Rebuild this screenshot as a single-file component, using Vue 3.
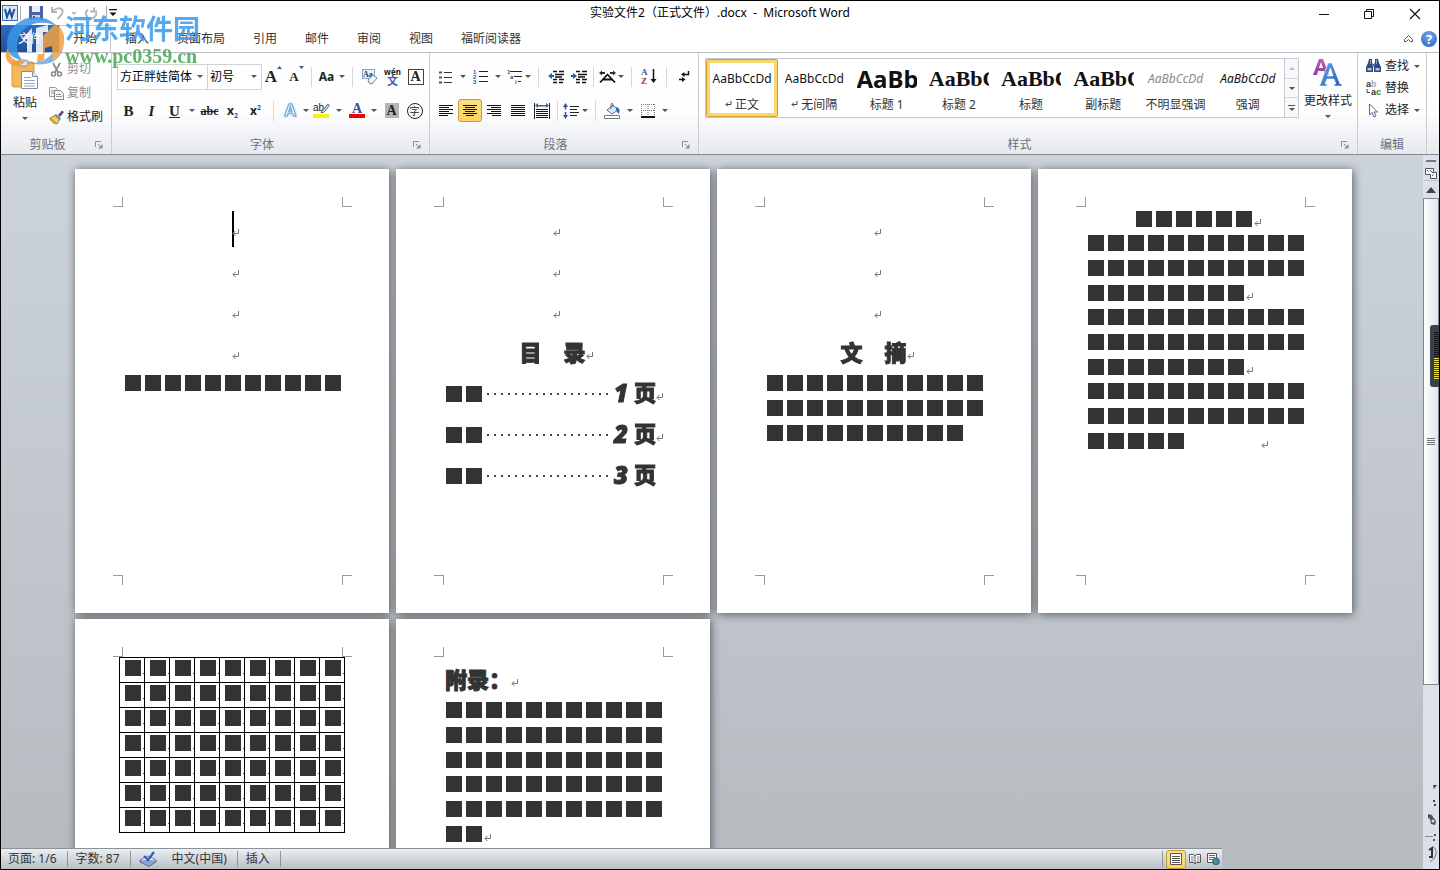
<script setup>
const tabs = ['开始', '插入', '页面布局', '引用', '邮件', '审阅', '视图', '福昕阅读器']

const styles = [
  { name: '正文', sample: 'AaBbCcDd', kind: 'norm', mark: true, active: true },
  { name: '无间隔', sample: 'AaBbCcDd', kind: 'norm', mark: true },
  { name: '标题 1', sample: 'AaBb', kind: 'h1' },
  { name: '标题 2', sample: 'AaBbC', kind: 'h2' },
  { name: '标题', sample: 'AaBbC', kind: 'h2' },
  { name: '副标题', sample: 'AaBbC', kind: 'h2' },
  { name: '不明显强调', sample: 'AaBbCcDd', kind: 'subtle' },
  { name: '强调', sample: 'AaBbCcDd', kind: 'em' }
]

const row = (n, mark = '', center = false) => ({ n, mark, center })

const pages = [
  { parts: [
    { type: 'empty', cursor: true }, { type: 'empty' }, { type: 'empty' }, { type: 'empty' },
    { type: 'rows', rows: [row(11)] }
  ] },
  { parts: [
    { type: 'empty' }, { type: 'empty' }, { type: 'empty' },
    { type: 'title', text: '目　录', center: true },
    { type: 'toc', page: 1, mark: true }, { type: 'toc', page: 2, mark: true }, { type: 'toc', page: 3 }
  ] },
  { parts: [
    { type: 'empty' }, { type: 'empty' }, { type: 'empty' },
    { type: 'title', text: '文　摘', center: true },
    { type: 'rows', after: true, rows: [row(11), row(11), row(10)] }
  ] },
  { parts: [
    { type: 'rows', rows: [row(6, 'near', true)] },
    { type: 'rows', rows: [row(11), row(11), row(8, 'near')] },
    { type: 'rows', rows: [row(11), row(11), row(8, 'near')] },
    { type: 'rows', rows: [row(11), row(11), row(5, 'far')] }
  ] },
  { table: true },
  { parts: [
    { type: 'title', text: '附录：', center: false },
    { type: 'rows', after: true, rows: [row(11), row(11), row(11)] },
    { type: 'rows', rows: [row(11), row(11), row(2, 'near')] }
  ] }
]
</script>

<template>
  <div class="window">
    <header class="titlebar">
      <div class="quick">
        <svg class="wicon" width="17" height="17" viewBox="0 0 17 17">
          <rect x="0.5" y="0.5" width="15" height="15" fill="#dce9f6" stroke="#3d6ea8" />
          <path d="M3 4l2 8 2.800-7 2 7L12.500 4" fill="none" stroke="#1f4f96" stroke-width="2" />
        </svg>
        <i class="vline"></i>
        <button aria-label="保存">
          <svg width="14" height="14" viewBox="0 0 14 14"><path d="M0 0h14v14H1.500L0 12.500z" fill="#4b61a8" /><rect x="3" y="0" width="8" height="6" fill="#e8eefa" /><rect x="3" y="9" width="8" height="5" fill="#cdd6ee" /><rect x="4" y="10" width="2" height="3" fill="#36457e" /></svg>
        </button>
        <button aria-label="撤消" class="undo">
          <svg width="14" height="14" viewBox="0 0 14 14"><path d="M1 1v5h5M1.500 5.500C4 2 10 1 11.500 4.500 12.500 8 9 10 6.500 13" fill="none" stroke="#b4b7bc" stroke-width="2" /></svg>
        </button>
        <i class="dd pale"></i>
        <button aria-label="重复" class="redo">
          <svg width="14" height="14" viewBox="0 0 14 14"><path d="M10 1.500v4h-4M4 3.500C0.500 6 1.500 12 6.500 12.500 11.500 12.500 13.500 8 11.500 4.500" fill="none" stroke="#b4b7bc" stroke-width="2" /></svg>
        </button>
        <i class="vline"></i>
        <button aria-label="自定义快速访问工具栏" class="custom">
          <svg width="8" height="8" viewBox="0 0 8 8"><path d="M0 0h8v1.200H0zM0.500 3.500h7L4 7z" fill="#111" /></svg>
        </button>
      </div>
      <h1>实验文件2（正式文件）.docx &nbsp;-&nbsp; Microsoft Word</h1>
      <div class="winbtns">
        <button aria-label="最小化"><svg width="12" height="12" viewBox="0 0 12 12"><path d="M1 6.500h10" stroke="#111" /></svg></button>
        <button aria-label="还原"><svg width="12" height="12" viewBox="0 0 12 12"><path d="M1.500 3.500h7v7h-7zM3.500 3.500v-2h7v7h-2" fill="none" stroke="#111" /></svg></button>
        <button aria-label="关闭"><svg width="12" height="12" viewBox="0 0 12 12"><path d="M1 1l10 10M11 1L1 11" stroke="#111" stroke-width="1.200" /></svg></button>
      </div>
    </header>

    <nav class="tabs">
      <button class="file">文件</button>
      <button v-for="(t, i) in tabs" :key="t" class="tab" :class="{ active: i === 0 }">{{ t }}</button>
      <span class="grow"></span>
      <button class="plain" aria-label="功能区最小化">
        <svg width="11" height="9" viewBox="0 0 11 9"><path d="M1.500 5.500L5.500 1.500l4 4v2H7.500L5.500 5.500l-2 2h-2z" fill="#fff" stroke="#555" /></svg>
      </button>
      <button class="help" aria-label="帮助">?</button>
    </nav>

    <section class="ribbon">
      <div class="group clip">
        <div class="body">
          <button class="big">
            <svg width="28" height="31" viewBox="0 0 28 31">
              <rect x="1" y="3" width="22" height="25" rx="2" fill="#efb95c" stroke="#d89a3c" />
              <rect x="7" y="1" width="10" height="6" rx="2" fill="#e4e6ea" stroke="#8b9099" />
              <path d="M10.500 12.500h11l5 5v12h-16z" fill="#fff" stroke="#7d8ca8" />
              <path d="M21.500 12.500v5h5" fill="#dfe7f3" stroke="#7d8ca8" />
              <path d="M13 18.500h7M13 21.500h11M13 24.500h11M13 27h11" stroke="#8fa5c9" />
            </svg>
            <span>粘贴</span><i class="dd"></i>
          </button>
          <div class="stack">
            <button class="line off">
              <svg width="15" height="15" viewBox="0 0 15 15"><path d="M4 1l5 9M11 1L6 10" stroke="#85888d" stroke-width="1.600" fill="none" /><circle cx="4.500" cy="12" r="2" fill="none" stroke="#85888d" stroke-width="1.500" /><circle cx="10.500" cy="12" r="2" fill="none" stroke="#85888d" stroke-width="1.500" /></svg>剪切
            </button>
            <button class="line off">
              <svg width="15" height="15" viewBox="0 0 15 15"><path d="M0.500 1.500h6l2 2v7h-8z" fill="#f2f2f2" stroke="#96999e" /><path d="M2 5h4M2 7h4" stroke="#96999e" /><path d="M5.500 4.500h6l3 3v6h-9z" fill="#f7f7f7" stroke="#85888d" /><path d="M7 8.500h5M7 10.500h6" stroke="#96999e" /></svg>复制
            </button>
            <button class="line">
              <svg width="15" height="15" viewBox="0 0 15 15"><path d="M9 5l4-4.500L15 2l-4 5z" fill="#5a4a78" /><path d="M1 8l6-3 4 4-3 5z" fill="#f0cf52" stroke="#a98518" /><path d="M7 4l5 4.500-1.500 1.500L5.500 5.500z" fill="#6c7fa8" /><path d="M0 9l5 5 3 .5L1 8z" fill="#c79e2b" /></svg>格式刷
            </button>
          </div>
        </div>
        <div class="caption"><span>剪贴板</span><button class="launch" aria-label="剪贴板选项"><svg width="8" height="8" viewBox="0 0 8 8"><path d="M.5 6V.5H6M3 3l3 3" fill="none" stroke="#8a9099" /><path d="M7.500 3v4.500H3z" fill="#8a9099" /></svg></button></div>
      </div>

      <div class="group font">
        <div class="body rows">
          <div class="tools">
            <label class="combo face"><select aria-label="字体"><option>方正胖娃简体</option></select><i class="dd"></i></label>
            <label class="combo size"><select aria-label="字号"><option>初号</option></select><i class="dd"></i></label>
            <button class="t serif" aria-label="增大字体"><b class="f16">A</b><svg class="tip" width="5" height="12" viewBox="0 0 5 12"><path d="M0 4h5L2.500 1z" fill="#3b5c9a" /></svg></button>
            <button class="t serif" aria-label="缩小字体"><b class="f13">A</b><svg class="tip" width="5" height="12" viewBox="0 0 5 12"><path d="M0 1h5L2.500 4z" fill="#3b5c9a" /></svg></button>
            <i class="sep7"></i>
            <button class="t" aria-label="更改大小写"><b class="f12">Aa</b></button><i class="a8"><i class="dd"></i></i>
            <i class="sep12"></i>
            <button class="t" aria-label="清除格式">
              <svg width="16" height="16" viewBox="0 0 16 16"><rect x="0.500" y="0.500" width="12" height="9" fill="#eaf1fb" stroke="#8aa0c6" /><text x="1" y="8" font-size="8" font-weight="700" font-family="Liberation Serif, serif" fill="#223a70">Aa</text><path d="M6 11l5-5 4 3-5 6-3-1z" fill="#f3f6fb" stroke="#7080a8" /></svg>
            </button>
            <button class="t pinyin" aria-label="拼音指南"><small>wén</small><span>文</span></button>
            <button class="t" aria-label="字符边框"><b class="boxed">A</b></button>
          </div>
          <div class="tools">
            <button class="t serif" aria-label="加粗"><b class="f14">B</b></button>
            <button class="t serif" aria-label="倾斜"><b class="f14 it">I</b></button>
            <button class="t serif" aria-label="下划线"><b class="f14 un">U</b></button><i class="a12"><i class="dd"></i></i>
            <button class="t serif" aria-label="删除线"><b class="f12 st">abc</b></button>
            <button class="t" aria-label="下标"><b class="f12">x<sub>2</sub></b></button>
            <button class="t" aria-label="上标"><b class="f12">x<sup>2</sup></b></button>
            <i class="sep12"></i>
            <button class="t" aria-label="文本效果"><b class="glow">A</b></button><i class="a8"><i class="dd"></i></i>
            <button class="t" aria-label="突出显示">
              <svg width="17" height="17" viewBox="0 0 17 17"><text x="0" y="9" font-size="10" font-family="Liberation Sans, sans-serif" fill="#222">ab</text><path d="M9 9l6-7 1.500 1.500-6 7H8z" fill="#c9d5ea" stroke="#5b6b92" /><rect x="0" y="12" width="16" height="4" fill="#f8f112" /></svg>
            </button><i class="a12"><i class="dd"></i></i>
            <button class="t" aria-label="字体颜色">
              <svg width="16" height="17" viewBox="0 0 16 17"><text x="3" y="11" font-size="14" font-weight="700" font-family="Liberation Serif, serif" fill="#2f4f8f">A</text><rect x="0" y="12" width="16" height="4" fill="#f00000" /></svg>
            </button><i class="a12"><i class="dd"></i></i>
            <button class="t" aria-label="字符底纹"><b class="shaded">A</b></button>
            <button class="t" aria-label="带圈字符"><span class="ring">字</span></button>
          </div>
        </div>
        <div class="caption"><span>字体</span><button class="launch" aria-label="字体选项"><svg width="8" height="8" viewBox="0 0 8 8"><path d="M.5 6V.5H6M3 3l3 3" fill="none" stroke="#8a9099" /><path d="M7.500 3v4.500H3z" fill="#8a9099" /></svg></button></div>
      </div>

      <div class="group para">
        <div class="body rows">
          <div class="tools">
            <button class="t" aria-label="项目符号"><svg width="14" height="14" viewBox="0 0 14 14"><path d="M5 2.500h8M5 7.500h8M5 12.500h8" stroke="#333" /><path d="M0 1.500h3v2H0zM0 6.500h3v2H0zM0 11.500h3v2H0z" fill="#3b5c78" /></svg></button><i class="a12"><i class="dd"></i></i>
            <button class="t" aria-label="编号"><svg width="15" height="15" viewBox="0 0 15 15"><path d="M6 2.500h9M6 7.500h9M6 12.500h9" stroke="#222" /><g font-size="6" font-weight="700" font-family="Liberation Sans, sans-serif" fill="#2d5a9c"><text x="0" y="5">1</text><text x="0" y="10">2</text><text x="0" y="15">3</text></g></svg></button><i class="a12"><i class="dd"></i></i>
            <button class="t w20" aria-label="多级列表"><svg width="17" height="15" viewBox="0 0 17 15"><path d="M4 2.500h12M8 7.500h8M12 12.500h3" stroke="#222" /><g font-size="6" font-weight="700" font-family="Liberation Sans, sans-serif" fill="#2d4a7c"><text x="1" y="5">1</text><text x="4" y="10">a</text><text x="9" y="15">i</text></g></svg></button><i class="a8"><i class="dd"></i></i>
            <i class="sep12"></i>
            <button class="t" aria-label="减少缩进量"><svg width="16" height="14" viewBox="0 0 16 14"><path d="M5 1.500h4M11 1.500h5M7 4.500h9M7 7h7M5 9.500h4M11 9.500h5M5 12.500h4M11 12.500h4" stroke="#111" stroke-width="1.500" /><path d="M0 6l4-3v2h2v2H4v2z" fill="#2d58b0" /></svg></button>
            <button class="t" aria-label="增加缩进量"><svg width="16" height="14" viewBox="0 0 16 14"><path d="M5 1.500h4M11 1.500h5M7 4.500h9M7 7h7M5 9.500h4M11 9.500h5M5 12.500h4M11 12.500h4" stroke="#111" stroke-width="1.500" /><path d="M6 6L2 3v2H0v2h2v2z" fill="#2d58b0" /></svg></button>
            <i class="sep7"></i>
            <button class="t w20" aria-label="中文版式"><svg width="17" height="14" viewBox="0 0 17 14"><path d="M1 12.500L8.500 4.500 16 12.500M4 9.500h9" stroke="#111" stroke-width="1.800" fill="none" /><path d="M0 3l3-2.500V2h3v2H3v1.500zM17 3l-3-2.500V2h-3v2h3v1.500z" fill="#1f2d50" /></svg></button><i class="a8"><i class="dd"></i></i>
            <i class="sep12"></i>
            <button class="t" aria-label="排序"><svg width="16" height="17" viewBox="0 0 16 17"><g font-size="9" font-weight="700" font-family="Liberation Serif, serif"><text x="0" y="7" fill="#2d58a0">A</text><text x="0" y="16" fill="#a03030">Z</text></g><path d="M12.500 1v12" stroke="#111" stroke-width="1.500" /><path d="M9.500 11h6l-3 4z" fill="#111" /></svg></button>
            <i class="sep12"></i>
            <button class="t" aria-label="显示编辑标记"><svg width="12" height="13" viewBox="0 0 12 13"><path d="M10.500 1v3.500H6M1 9.500h4" stroke="#111" stroke-width="1.500" fill="none" /><path d="M3 4.500l3.500-2.500v5zM7.500 9.500L4 7v5z" fill="#111" /></svg></button>
          </div>
          <div class="tools">
            <button class="t w24" aria-label="左对齐"><svg width="14" height="12" viewBox="0 0 14 12"><path d="M0 .5h14M0 2.500h10M0 4.500h14M0 6.500h10M0 8.500h14M0 10.500h9" stroke="#111" /></svg></button>
            <button class="t w24 on" aria-label="居中"><svg width="14" height="12" viewBox="0 0 14 12"><path d="M0 .5h14M2 2.500h10M0 4.500h14M2 6.500h10M0 8.500h14M3 10.500h8" stroke="#111" /></svg></button>
            <button class="t w24" aria-label="右对齐"><svg width="14" height="12" viewBox="0 0 14 12"><path d="M0 .5h14M4 2.500h10M0 4.500h14M4 6.500h10M0 8.500h14M5 10.500h9" stroke="#111" /></svg></button>
            <button class="t w24" aria-label="两端对齐"><svg width="14" height="12" viewBox="0 0 14 12"><path d="M0 .5h14M0 2.500h14M0 4.500h14M0 6.500h14M0 8.500h14M0 10.500h14" stroke="#111" /></svg></button>
            <button class="t w24" aria-label="分散对齐"><svg width="16" height="16" viewBox="0 0 16 16"><path d="M.5 0v16M15.500 0v16" stroke="#222" /><path d="M2 6.500h12M2 8.500h12M2 10.500h12M2 12.500h12M2 14.500h12" stroke="#111" /><path d="M1 2.500L4 0v2h8V0l3 2.500L12 5V3.500H4V5z" fill="#3a69a8" /></svg></button>
            <i class="sep7"></i>
            <button class="t w20" aria-label="行距"><svg width="16" height="16" viewBox="0 0 16 16"><path d="M7 3.500h9M7 6.500h7M7 9.500h9M7 12.500h7" stroke="#222" /><path d="M2.500 3v3.500M2.500 9v4" stroke="#2d50b0" stroke-width="1.500" /><path d="M0 4l2.500-4L5 4zM0 12l2.500 4L5 12z" fill="#2d50b0" /></svg></button><i class="a8"><i class="dd"></i></i>
            <i class="sep12"></i>
            <button class="t" aria-label="底纹"><svg width="17" height="16" viewBox="0 0 17 16"><path d="M3 7l6-5 5 5-6 4z" fill="#dfe8f5" stroke="#50688f" /><path d="M7 6V1.500C7 0 9 0 9 1.500V4" fill="none" stroke="#50688f" /><path d="M12 4c4 1 4 3 3 7-2-1-2-3-3-4z" fill="#2f6ab0" /><path d="M.5 12.500h15v3h-15z" fill="#fff" stroke="#777" /></svg></button><i class="a12"><i class="dd"></i></i>
            <button class="t" aria-label="框线"><svg width="14" height="14" viewBox="0 0 14 14"><path d="M.5 0v13M13.500 0v13M7 0v13M0 .5h14M0 6.500h14" stroke="#777" stroke-dasharray="1 1" fill="none" /><path d="M0 13h14" stroke="#111" stroke-width="2" /></svg></button><i class="a12"><i class="dd"></i></i>
          </div>
        </div>
        <div class="caption"><span>段落</span><button class="launch" aria-label="段落选项"><svg width="8" height="8" viewBox="0 0 8 8"><path d="M.5 6V.5H6M3 3l3 3" fill="none" stroke="#8a9099" /><path d="M7.500 3v4.500H3z" fill="#8a9099" /></svg></button></div>
      </div>

      <div class="group style">
        <div class="body">
          <div class="gallery">
            <button v-for="s in styles" :key="s.name" class="sty" :class="{ sel: s.active }">
              <span class="sample" :class="s.kind">{{ s.sample }}</span>
              <span class="sname"><svg v-if="s.mark" width="7" height="7" viewBox="0 0 7 7"><path d="M6 0v3.500H1M3 1.500l-2 2 2 2" fill="none" stroke="#444" /></svg>{{ s.name }}</span>
            </button>
            <div class="gscroll">
              <button aria-label="上一行"><i class="up"></i></button>
              <button aria-label="下一行"><i class="dd"></i></button>
              <button aria-label="其他"><i class="bar"></i><i class="dd"></i></button>
            </div>
          </div>
          <button class="big change">
            <svg width="30" height="30" viewBox="0 0 30 30">
              <defs>
                <linearGradient id="pa" x2="0" y2="1"><stop offset="0" stop-color="#c558b4" /><stop offset="1" stop-color="#8a3f9f" /></linearGradient>
                <linearGradient id="ba" x2="1" y2="1"><stop offset="0" stop-color="#6aa6e8" /><stop offset="1" stop-color="#1f5cb8" /></linearGradient>
              </defs>
              <path d="M0 17L6 1h4l6 16h-4l-1-4H5l-1 4zM6 10h4L8 4z" fill="url(#pa)" />
              <path d="M7 27L15 5h4l8 21h2v2h-8v-2h2l-2-5h-7l-2 5h2v2H6v-1zM14.500 18h5.500L17.500 10z" fill="url(#ba)" stroke="#fff" stroke-width=".6" />
            </svg>
            <span>更改样式</span><i class="dd"></i>
          </button>
        </div>
        <div class="caption"><span>样式</span><button class="launch" aria-label="样式选项"><svg width="8" height="8" viewBox="0 0 8 8"><path d="M.5 6V.5H6M3 3l3 3" fill="none" stroke="#8a9099" /><path d="M7.500 3v4.500H3z" fill="#8a9099" /></svg></button></div>
      </div>

      <div class="group edit">
        <div class="body stack">
          <button class="line">
            <svg width="15" height="14" viewBox="0 0 15 14"><path d="M3 0h3v4l1 1V13H0V8l2-4zM9 0h3l1 4 2 4v5H8V5l1-1z" fill="#2e4a7e" /><path d="M6 5h3v3H6z" fill="#5573a8" /><path d="M1.500 9h4v2.500h-4zM9.500 9h4v2.500h-4z" fill="#a9c2e6" /><path d="M4 1h1v4H4zM10 1h1v4h-1z" fill="#8aa5d0" /></svg>查找<i class="dd"></i>
          </button>
          <button class="line">
            <svg width="15" height="16" viewBox="0 0 15 16"><g font-size="9" font-weight="700" font-family="Liberation Sans, sans-serif"><text x="0" y="7" fill="#333">a</text><text x="5" y="7" fill="#aaa">b</text><text x="5" y="15" fill="#333">a</text><text x="10" y="15" fill="#2b8a3b">c</text></g><path d="M1 9v3.500h3" stroke="#345" fill="none" /></svg>替换
          </button>
          <button class="line">
            <svg width="15" height="15" viewBox="0 0 15 15"><path d="M3.500 1v11l2.500-2.500L8 14l2-1-2-4h3.500z" fill="#fff" stroke="#56698e" /></svg>选择<i class="dd"></i>
          </button>
        </div>
        <div class="caption"><span>编辑</span></div>
      </div>
    </section>

    <div class="work">
      <div class="left">
        <main class="canvas">
          <div class="pages">
            <article v-for="(p, i) in pages" :key="i" class="page">
              <i class="corner tl"></i><i class="corner tr"></i><i class="corner bl"></i><i class="corner br"></i>
              <table v-if="p.table">
                <tbody>
                  <tr v-for="r in 7" :key="r"><td v-for="c in 9" :key="c"><i class="sq"></i></td></tr>
                </tbody>
              </table>
              <div v-else class="flow">
                <template v-for="(part, k) in p.parts" :key="k">
                  <div v-if="part.type === 'empty'" class="empty">
                    <i v-if="part.cursor" class="cursor"></i>
                    <svg class="ret" width="8" height="8" viewBox="0 0 8 8"><path d="M6.500 0v4.500H1M3.500 2l-2.500 2.500 2.500 2.500" fill="none" stroke="#777" /></svg>
                  </div>
                  <h2 v-else-if="part.type === 'title'" class="heading" :class="{ center: part.center }">
                    <span>{{ part.text }}</span>
                    <svg class="ret" width="8" height="8" viewBox="0 0 8 8"><path d="M6.500 0v4.500H1M3.500 2l-2.500 2.500 2.500 2.500" fill="none" stroke="#777" /></svg>
                  </h2>
                  <div v-else-if="part.type === 'toc'" class="toc">
                    <i class="sq"></i><i class="sq"></i><i class="leader"></i>
                    <em>{{ part.page }}</em><b>页</b>
                    <svg v-if="part.mark" class="ret" width="8" height="8" viewBox="0 0 8 8"><path d="M6.500 0v4.500H1M3.500 2l-2.500 2.500 2.500 2.500" fill="none" stroke="#777" /></svg>
                  </div>
                  <div v-else class="para-rows" :class="{ after: part.after }">
                    <div v-for="(r, j) in part.rows" :key="j" class="brow" :class="{ center: r.center }">
                      <i v-for="n in r.n" :key="n" class="sq"></i>
                      <svg v-if="r.mark" class="ret" :class="r.mark" width="8" height="8" viewBox="0 0 8 8"><path d="M6.500 0v4.500H1M3.500 2l-2.500 2.500 2.500 2.500" fill="none" stroke="#777" /></svg>
                    </div>
                  </div>
                </template>
              </div>
            </article>
          </div>
        </main>
        <footer class="status">
          <div class="bar-l">
            <span>页面: 1/6</span><i></i><span>字数: 87</span><i></i>
            <svg width="18" height="16" viewBox="0 0 18 16"><path d="M1 9l8-4 8 4-7 5z" fill="#f4f7fc" stroke="#6a7ba5" /><path d="M1 9v2l9 4.500L17 11V9" fill="#8fa3cc" stroke="#5a6b95" /><path d="M5 5l4 4 6-8" fill="none" stroke="#2b5fc0" stroke-width="2.200" /></svg>
            <span>中文(中国)</span><i></i><span>插入</span><i></i>
            <span class="grow"></span><i></i>
            <button class="view on" aria-label="页面视图"><svg width="12" height="12" viewBox="0 0 12 12"><path d="M.5.5h11v11H.5z" fill="#fff" stroke="#555" /><path d="M2 3.500h8M2 5.500h8M2 7.500h8M2 9.500h8" stroke="#555" /></svg></button>
            <button class="view" aria-label="阅读版式"><svg width="12" height="12" viewBox="0 0 12 12"><path d="M.5 1.500h4L6 3l1.500-1.500h4v8h-4L6 11 4.500 9.500h-4zM6 3v8" fill="#fff" stroke="#555" /><path d="M2 4h2.500M2 6h2.500M2 8h2.500M8 4h2.500M8 6h2.500M8 8h2.500" stroke="#777" /></svg></button>
            <button class="view" aria-label="Web版式"><svg width="13" height="12" viewBox="0 0 13 12"><path d="M.5.5h9v9h-9z" fill="#fff" stroke="#555" /><path d="M2 2.500h6M2 4.500h6M2 6.500h4" stroke="#666" /><circle cx="9" cy="8.500" r="3.400" fill="#4b8a9c" stroke="#33617a" /></svg></button>
          </div>
          <div class="bar-r"></div>
        </footer>
      </div>

      <aside class="scroll">
        <i class="split"></i>
        <button aria-label="标尺"><svg width="12" height="12" viewBox="0 0 12 12"><path d="M.5 1.500h8v4h3v6h-6v-4h-5z" fill="#f5f5f8" stroke="#555" /><path d="M2 3l1.500 1.500M5 3l3 3M7 9l1.500-1.500" stroke="#555" /></svg></button>
        <button class="upbtn" aria-label="向上滚动"><svg width="10" height="6" viewBox="0 0 10 6"><path d="M0 6h10L5 0z" fill="#444" /></svg></button>
        <div class="thumb"><i></i></div>
        <div class="track"></div>
        <div class="nav">
          <svg width="12" height="80" viewBox="0 0 12 80"><path d="M8 2h4l-3 4z" fill="#444" /><path d="M8 17h2v2H8zM9 21h2v2H9z" fill="#444" /><path d="M3 31l4 1 1 2 3 4-1 4-4-1-1-5-2-1z" fill="#555" /><circle cx="8" cy="38" r="1.500" fill="#dbe0ea" /><path d="M0 53.500h8" stroke="#888" /><path d="M9 51h2v2H9zM8 56h2v2H8z" fill="#555" /><path d="M4 67l3-2v9M4 74h4" stroke="#333" stroke-width="2" fill="none" /><path d="M8 64c5 2 4 11-3 15" fill="none" stroke="#777" /></svg>
        </div>
        <div class="meter"><i></i></div>
      </aside>
    </div>

    <div class="brand">
      <svg width="60" height="56" viewBox="0 0 60 56">
        <path d="M2 32C1 14 16 2 33 3c9 1 15 5 20 10-7-4-13-5-20-4C19 11 12 20 12 33c0 5 2 9 5 13C8 45 3 40 2 32z" fill="#3b97e6" />
        <path d="M17 46c11 7 28 1 34-13 3-8 2-15-2-20 9 5 11 14 9 22C54 48 42 52 28 50c-5-1-9-2-11-4z" fill="#2f8fe0" opacity=".75" />
        <path d="M3 34c1 10 8 15 18 12-4 8-17 8-20-2-1-4 0-7 2-10z" fill="#f39a3b" />
        <path d="M34 26l16-16c7 3 10 10 9 18-1 9-5 15-11 20l-1-16-7 2-1 14h-7z" fill="#f5a13f" />
        <path d="M17 25l10-11v24h-5V25zM31 14l12-3v7h-5v22h-7z" fill="#fff" />
      </svg>
      <div><strong>河东软件园</strong><span>www.pc0359.cn</span></div>
    </div>
  </div>
</template>

<style>
html, body { margin: 0; background: #fff; }
</style>

<style scoped>
* { box-sizing: border-box; }
.window {
  position: relative; display: flex; flex-direction: column; height: 100vh;
  border: 1px solid #000; background: #fff; overflow: hidden;
  font: 12px/16px "Noto Sans", "Noto Sans CJK SC", sans-serif; color: #222;
}
button {
  display: flex; align-items: center; justify-content: center; margin: 0; padding: 0;
  border: 0; background: none; font: inherit; color: inherit; white-space: nowrap;
}
svg { display: block; flex: none; }
.grow { flex: 1; }
.dd { flex: none; width: 0; height: 0; border: 3px solid transparent; border-top-color: #555; border-bottom: 0; }
.pale { border-top-color: #bbb; }

.titlebar { display: grid; grid-template-columns: 1fr auto 1fr; align-items: center; height: 24px; }
.titlebar h1 { margin: 0; font-size: 12px; font-weight: 400; color: #000; }
.quick { display: flex; align-items: center; height: 20px; padding-left: 1px; }
.vline { width: 1px; height: 14px; margin-left: 1px; background: #aaa; }
.quick button { margin-left: 8px; }
.quick .undo { margin: 0 6px 0 8px; }
.quick .redo { margin: 0 7px; }
.quick .custom { margin-left: 2px; }
.winbtns { display: flex; justify-content: flex-end; }
.winbtns button { width: 45px; height: 24px; padding-top: 2px; }
.winbtns button:last-child { width: 48px; }

.tabs { display: flex; align-items: center; height: 27px; padding-right: 2px; }
.file { width: 58px; height: 27px; background: linear-gradient(#2f6cc4, #1f4f9e); color: #fff; }
.tab { height: 27px; padding: 0 14px; color: #333; }
.tab.active { border: 1px solid #c4c9d0; border-bottom: 0; padding: 0 13px; background: #fff; }
.plain { width: 24px; }
.help { width: 16px; height: 16px; margin-left: 1px; border-radius: 50%; background: radial-gradient(circle at 50% 30%, #76a7e8, #2b62bb); color: #fff; font-weight: 700; font-size: 13px; }

.ribbon { display: flex; height: 103px; border-top: 1px solid #b9bdc4; border-bottom: 1px solid #858a91; background: linear-gradient(#fff 0, #fdfdfe 60%, #e6e9ed 100%); }
.group { display: flex; flex: none; flex-direction: column; border-right: 1px solid #c9cdd3; }
.clip { width: 111px; }
.font { width: 318px; }
.para { width: 269px; }
.style { flex: 1 1 0; min-width: 0; }
.edit { width: 69px; margin-right: 12px; }
.body { display: flex; flex: 1; }
.caption { display: flex; align-items: center; height: 19px; color: #6a7280; }
.caption span { flex: 1; text-align: center; }
.launch { width: 8px; height: 8px; margin: 0 8px 0 1px; }

.big { flex-direction: column; justify-content: flex-start; width: 48px; padding-top: 6px; }
.big span { margin-top: 5px; }
.big .dd { margin-top: 6px; }
.stack { display: flex; flex-direction: column; }
.clip .stack { padding-top: 4px; }
.line { height: 24px; justify-content: flex-start; gap: 3px; }
.off { color: #8a8d92; }
.edit .stack { padding: 2px 0 0 8px; }
.edit .line { height: 22px; gap: 4px; }
.edit .line .dd { margin-left: 1px; }

.rows { flex-direction: column; padding: 10px 0 0 5px; gap: 7px; }
.para .rows { padding-left: 4px; }
.tools { display: flex; align-items: center; height: 27px; }
.t { width: 23px; height: 23px; color: #222; }
.w20 { width: 20px; }
.w24 { width: 24px; }
.a8, .a12 { display: flex; justify-content: center; width: 8px; }
.a12 { width: 12px; }
.sep7, .sep12 { width: 7px; height: 20px; background: linear-gradient(#d5d8dc, #d5d8dc) center / 1px 100% no-repeat; }
.sep12 { width: 12px; }
.combo { display: flex; align-items: center; height: 26px; padding: 0 4px 0 2px; border: 1px solid #d0d4da; background: #fff; }
.combo select { flex: 1; min-width: 0; height: 22px; padding: 0; border: 0; appearance: none; background: none; font: inherit; color: #000; }
.face { width: 91px; }
.size { width: 54px; border-left: 0; }
.serif { font-family: "Liberation Serif", serif; }
.f16 { font-size: 17px; } .f14 { font-size: 15px; } .f13 { font-size: 13px; } .f12 { font-size: 12px; }
.tip { align-self: flex-start; }
.it { font-style: italic; } .un { text-decoration: underline; } .st { text-decoration: line-through; }
sub, sup { font-size: 7px; line-height: 0; color: #2d58a0; }
.pinyin { flex-direction: column; line-height: 8px; font-weight: 700; }
.pinyin small { font-size: 8px; }
.pinyin span { line-height: 10px; color: #3d5ba8; font-size: 11px; }
.boxed { width: 16px; height: 16px; border: 1px solid #444; font: 700 14px/14px "Liberation Serif", serif; }
.shaded { width: 14px; height: 15px; background: #b5b5b5; font: 700 14px/15px "Liberation Serif", serif; }
.glow { font: 700 17px/17px "Liberation Sans", sans-serif; color: #fff; -webkit-text-stroke: 1px #6ba4d4; filter: drop-shadow(0 0 1px #7ab8ea); }
.ring { width: 16px; height: 16px; border: 1px solid #222; border-radius: 50%; font-size: 10px; line-height: 14px; }
.on { border: 1px solid #c29b3a; border-radius: 3px; background: linear-gradient(#fbe08a, #fdd35f); }

.style .body { padding: 5px 0 0 6px; }
.style .big { flex: none; width: 58px; padding-top: 0; }
.gallery { display: flex; flex: 1; min-width: 0; height: 60px; border: 1px solid #c5cad1; background: #fff; }
.sty { flex: 1; flex-direction: column; min-width: 0; padding: 5px 5px 0; border: 1px solid transparent; }
.sel { border: 1px solid #c9a03c; border-radius: 2px; box-shadow: inset 0 0 0 3px #fbd66b; }
.sample { width: 100%; height: 28px; overflow: hidden; line-height: 28px; font-size: 12px; color: #111; }
.h1 { text-align: left; font-size: 24px; font-weight: 700; }
.h2 { text-align: left; font-family: "Liberation Serif", serif; font-size: 22px; font-weight: 700; }
.subtle { font-style: italic; color: #8a8a8a; }
.em { font-style: italic; }
.sname { display: flex; align-items: center; justify-content: center; gap: 3px; height: 23px; color: #333; }
.gscroll { display: flex; flex-direction: column; width: 14px; border-left: 1px solid #c5cad1; }
.gscroll button { flex: 1; flex-direction: column; gap: 2px; border-bottom: 1px solid #d5d9de; background: #f6f8fa; }
.gscroll button:last-child { border-bottom: 0; }
.up { border: 3px solid transparent; border-bottom-color: #bbb; border-top: 0; }
.bar { width: 7px; height: 1px; background: #555; }

.work { display: flex; flex: 1; min-height: 0; background: linear-gradient(#cdd3db, #b5bbbf); }
.left { display: flex; flex: 1; flex-direction: column; min-width: 0; }
.canvas { flex: 1; min-height: 0; overflow: hidden; }
.pages { display: grid; grid-template-columns: repeat(auto-fill, 314px); justify-content: center; gap: 6px 7px; padding: 14px 0 20px 3px; filter: drop-shadow(1px 1px 5px #55585c); }
.page { position: relative; height: 444px; padding: 37px 47px; background: #fff; }
.corner { position: absolute; width: 10px; height: 10px; border: 0 solid #9a9a9a; }
.tl { left: 38px; top: 28px; border-width: 0 1px 1px 0; }
.tr { right: 37px; top: 28px; border-width: 0 0 1px 1px; }
.bl { left: 38px; bottom: 28px; border-width: 1px 1px 0 0; }
.br { right: 37px; bottom: 28px; border-width: 1px 0 0 1px; }
.flow { padding: 5px 0 0 3px; }
.empty { display: flex; align-items: center; height: 41px; padding-left: 107px; }
.cursor { align-self: flex-start; width: 2px; height: 36px; margin-right: -2px; background: #000; }
.ret { margin-right: -8px; }
.empty .ret { margin-top: 2px; }
.heading { display: flex; align-items: center; height: 39px; margin: 0 3px 0 -1px; padding-bottom: 4px; font: 900 22px/35px "Noto Sans CJK SC", sans-serif; color: #333; -webkit-text-stroke: 1px #333; }
.heading .ret { margin-top: 9px; }
.toc .ret { margin-top: 7px; }
.center { justify-content: center; }
.toc { display: flex; align-items: center; height: 41px; padding-right: 7px; font-size: 22px; color: #333; -webkit-text-stroke: 1px #333; }
.toc .sq + .sq { margin-left: 4px; }
.toc em { margin-right: 6px; padding-bottom: 2px; font: italic 900 24px/39px "Noto Sans", sans-serif; }
.toc b { padding-bottom: 4px; font: 900 22px/37px "Noto Sans CJK SC", sans-serif; }
.leader { flex: 1; height: 2px; margin: 0 2px 0 5px; background: repeating-linear-gradient(90deg, #444 0 2px, transparent 2px 7px); }
.para-rows { display: flex; flex-direction: column; gap: 9px; margin-bottom: 8px; }
.para-rows.after { margin-top: 2px; }
.brow { display: flex; gap: 4px; height: 16px; }
.brow.center { margin-right: 3px; }
.brow .ret { align-self: flex-end; margin-left: -2px; }
.brow .far { margin-left: 73px; }
.sq { display: block; flex: none; width: 16px; height: 16px; background: #333; }
table { margin: 1px 0 0 -3px; border-collapse: collapse; }
td { position: relative; width: 25px; height: 25px; padding: 2px 3px 6px 5px; border: 1px solid #000; }
td::after { content: ""; position: absolute; right: 0; top: 15px; width: 1px; height: 1px; background: #444; }

.status { display: flex; height: 21px; }
.bar-l { display: flex; flex: 1; align-items: center; padding-left: 7px; border-top: 1px solid #8b9199; background: linear-gradient(#eceff2, #b9bfc6); color: #333; }
.bar-l > i { width: 1px; height: 16px; margin: 0 8px 0 10px; background: #8f959d; }
.bar-l > svg { margin-right: 15px; }
.bar-r { width: 201px; }
.view { width: 18px; height: 19px; }
.bar-l > i:last-of-type { margin-right: 3px; }
.view.on { width: 20px; }

.scroll { position: relative; display: flex; flex-direction: column; align-items: center; width: 16px; background: #dbe0ea; }
.split { width: 10px; height: 2px; margin: 5px 0 3px; background: #777; }
.scroll button { width: 15px; height: 15px; }
.scroll .upbtn { height: 18px; border-top: 1px solid #c0c5cf; }
.thumb { display: flex; align-items: center; justify-content: center; flex: 487; width: 16px; border: 1px solid #80858e; background: linear-gradient(90deg, #fff, #dfe4ee); }
.thumb i { width: 8px; height: 8px; background: repeating-linear-gradient(#777 0 1px, transparent 1px 2px); }
.track { flex: 98; }
.nav { height: 86px; }
.meter { position: absolute; right: 0; top: 170px; width: 9px; height: 62px; padding: 7px 0 0 4px; border-radius: 3px 0 0 3px; background: #3c4148; }
.meter i { display: block; width: 5px; height: 48px; background: repeating-linear-gradient(transparent 0 1px, #3c4148 1px 2px), linear-gradient(#15181c 52%, #e8dc4a 52%); }

.brand { position: absolute; left: 4px; top: 13px; display: flex; opacity: .85; pointer-events: none; }
.brand div { display: flex; flex-direction: column; }
.brand strong { font: 700 27px/28px "Noto Sans CJK SC", sans-serif; color: #3a9bed; }
.brand span { font: 700 20px/28px "Liberation Serif", serif; color: #44a850; }
</style>
